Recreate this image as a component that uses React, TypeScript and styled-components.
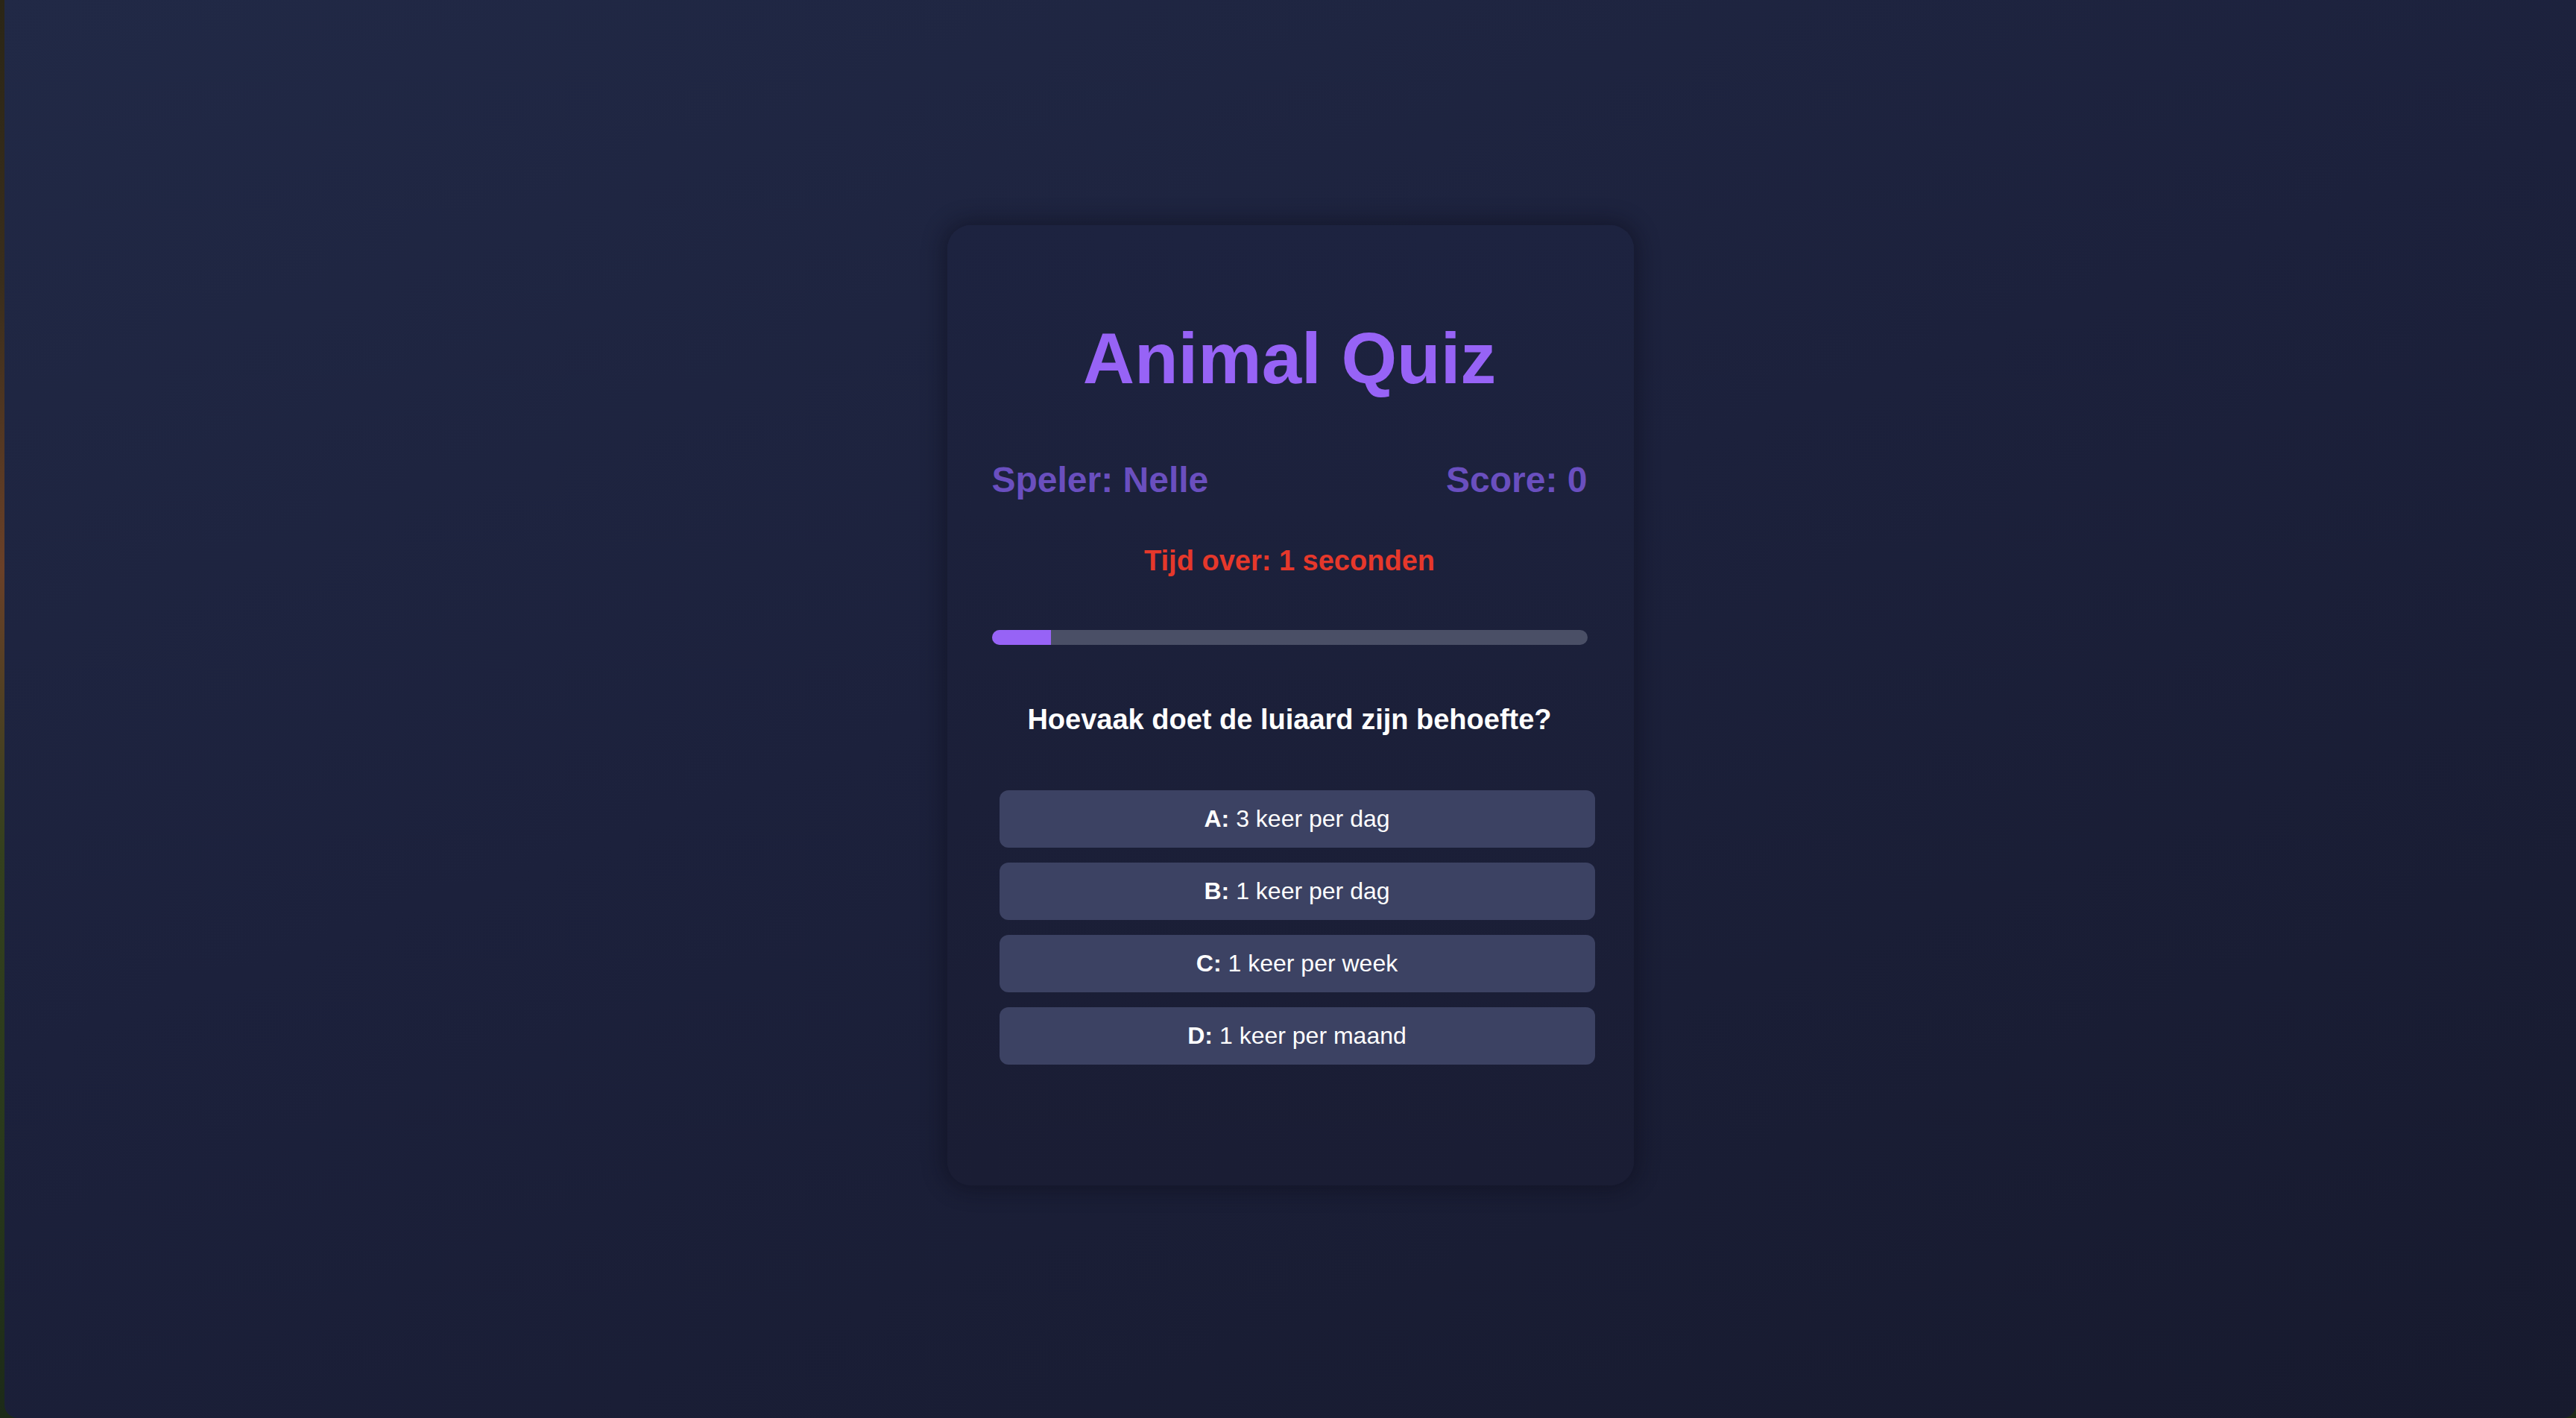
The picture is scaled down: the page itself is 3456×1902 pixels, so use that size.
import React from "react";
import styled, { createGlobalStyle } from "styled-components";

const GlobalStyle = createGlobalStyle`
  html, body {
    margin: 0;
    padding: 0;
    height: 100%;
  }
  body {
    font-family: "Liberation Sans", Arial, Helvetica, sans-serif;
    background: linear-gradient(
      180deg,
      #2b2616 0%,
      #3a2e1c 20%,
      #6a4028 40%,
      #34401e 60%,
      #2a3a1c 80%,
      #1c2a18 100%
    );
    overflow: hidden;
  }
  #root {
    height: 100%;
  }
`;

const Desktop = styled.div`
  display: flex;
  height: 100vh;
  padding-left: 6px;
  box-sizing: border-box;
`;

const Screen = styled.main`
  flex: 1;
  display: flex;
  align-items: center;
  justify-content: center;
  padding-bottom: 10px;
  box-sizing: border-box;
  background: linear-gradient(160deg, #212946 0%, #1c213c 45%, #171a2e 100%);
  border-radius: 0 0 18px 18px;
`;

const Card = styled.section`
  width: 921px;
  box-sizing: border-box;
  padding: 124px 62px 162px 60px;
  display: flex;
  flex-direction: column;
  background: linear-gradient(180deg, #1d2340 0%, #1b1f38 60%, #1a1d34 100%);
  border-radius: 32px;
  box-shadow: 0 0 28px 6px rgba(10, 12, 24, 0.45);
`;

const Title = styled.h1`
  margin: 0;
  font-size: 96px;
  line-height: 1.15;
  font-weight: 700;
  color: #9763f6;
  text-align: center;
`;

const InfoRow = styled.div`
  display: flex;
  justify-content: space-between;
  margin-top: 80px;
  font-size: 48px;
  line-height: 1.15;
  font-weight: 700;
  color: #6a4fbf;
`;

const Timer = styled.p`
  margin: 59px 0 0;
  font-size: 38px;
  line-height: 1.15;
  font-weight: 700;
  color: #e6382b;
  text-align: center;
`;

const Track = styled.div`
  margin-top: 71px;
  height: 20px;
  border-radius: 10px;
  background: #4a4f66;
  overflow: hidden;
`;

const Fill = styled.div`
  height: 100%;
  background: #9763f6;
`;

const Question = styled.h2`
  margin: 79px 0 0;
  font-size: 38px;
  line-height: 1.15;
  font-weight: 700;
  color: #ffffff;
  text-align: center;
`;

const Options = styled.div`
  margin: 72px 0 0 10px;
  width: 799px;
  display: flex;
  flex-direction: column;
  gap: 20px;
`;

const Option = styled.button`
  height: 77px;
  border: none;
  border-radius: 12px;
  background: #3c4263;
  color: #ffffff;
  font-family: "Liberation Sans", Arial, Helvetica, sans-serif;
  font-size: 32px;
  font-weight: 400;
  display: flex;
  align-items: center;
  justify-content: center;
  gap: 0.28em;
  cursor: pointer;
  padding: 0;
`;

const Letter = styled.strong`
  font-weight: 700;
`;

const options = [
  { letter: "A", text: "3 keer per dag" },
  { letter: "B", text: "1 keer per dag" },
  { letter: "C", text: "1 keer per week" },
  { letter: "D", text: "1 keer per maand" },
];

export default function App() {
  const progress = 10;
  return (
    <>
      <GlobalStyle />
      <Desktop>
        <Screen>
          <Card>
            <Title>Animal Quiz</Title>
            <InfoRow>
              <span>Speler: Nelle</span>
              <span>Score: 0</span>
            </InfoRow>
            <Timer>Tijd over: 1 seconden</Timer>
            <Track>
              <Fill style={{ width: `${progress}%` }} />
            </Track>
            <Question>Hoevaak doet de luiaard zijn behoefte?</Question>
            <Options>
              {options.map((o) => (
                <Option key={o.letter}>
                  <Letter>{o.letter}:</Letter>
                  <span>{o.text}</span>
                </Option>
              ))}
            </Options>
          </Card>
        </Screen>
      </Desktop>
    </>
  );
}
